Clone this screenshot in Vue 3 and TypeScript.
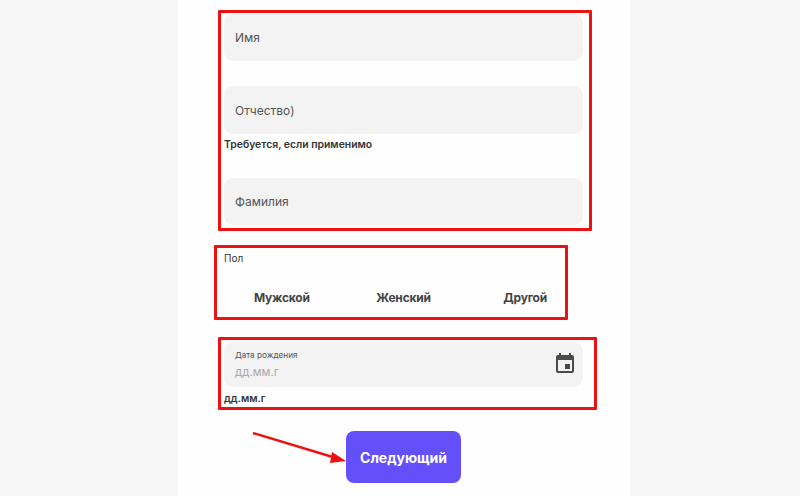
<script setup lang="ts">
const genders: string[] = ['Мужской', 'Женский', 'Другой']
</script>

<template>
  <div class="page">
    <main class="card">
      <div class="field name-first"><span class="ph">Имя</span></div>
      <div class="field name-mid"><span class="ph">Отчество)</span></div>
      <p class="help">Требуется, если применимо</p>
      <div class="field name-last"><span class="ph">Фамилия</span></div>

      <div class="gender-label">Пол</div>
      <div class="genders">
        <span v-for="g in genders" :key="g">{{ g }}</span>
      </div>

      <div class="field date">
        <div class="date-text">
          <span class="date-label">Дата рождения</span>
          <span class="date-ph">дд.мм.г</span>
        </div>
        <svg class="cal" viewBox="0 0 24 24" width="24" height="24" aria-hidden="true">
          <path fill="#4a4a4a" d="M19 4h-1V2h-2v2H8V2H6v2H5a2 2 0 0 0-2 2v14a2 2 0 0 0 2 2h14a2 2 0 0 0 2-2V6a2 2 0 0 0-2-2zm0 16H5V9h14v11z" />
          <rect fill="#4a4a4a" x="12" y="13" width="5" height="5" />
        </svg>
      </div>
      <p class="help date-help">дд.мм.г</p>

      <div class="actions">
        <button class="next" type="button">Следующий</button>
      </div>

      <div class="mark mark-a"></div>
      <div class="mark mark-b"></div>
      <div class="mark mark-c"></div>
      <svg class="arrow" viewBox="0 0 100 34" width="100" height="34" aria-hidden="true">
        <line x1="1" y1="1" x2="84" y2="26" stroke="#ee1111" stroke-width="2.4" />
        <polygon points="80,20 94,29 78,31" fill="#ee1111" />
      </svg>
    </main>
  </div>
</template>

<style scoped>
.page {
  width: 800px;
  height: 496px;
  overflow: hidden;
  background: #f7f7f7;
  display: flex;
  justify-content: center;
  font-family: Inter, "Liberation Sans", sans-serif;
  color: #3c3c3c;
}
.card {
  position: relative;
  box-sizing: border-box;
  width: 452px;
  height: 496px;
  margin-left: 8px;
  padding: 14px 47px 0 46px;
  background: #fefefe;
}
.field {
  box-sizing: border-box;
  height: 47px;
  border-radius: 9px;
  background: #f3f3f3;
  padding: 0 11px;
  display: flex;
  align-items: center;
}
.ph {
  font-size: 12px;
  color: #555;
}
.name-mid {
  margin-top: 25px;
  height: 48px;
}
.help {
  margin: 4px 0 0;
  height: 14px;
  font-size: 10.4px;
  line-height: 14px;
  font-weight: 600;
  color: #333;
}
.name-last {
  margin-top: 26px;
}
.gender-label {
  margin-top: 26px;
  height: 14px;
  font-size: 10px;
  line-height: 14px;
  color: #333;
}
.genders {
  margin-top: 25px;
  display: grid;
  grid-template-columns: repeat(3, 1fr);
  width: 365px;
  margin-left: -3px;
  font-size: 12px;
  letter-spacing: -0.2px;
  line-height: 16px;
  font-weight: 700;
  color: #444;
  text-align: center;
}
.date {
  margin-top: 36px;
  justify-content: space-between;
  height: 45px;
  padding-right: 6px;
}
.date-text {
  display: flex;
  flex-direction: column;
  gap: 4px;
}
.date-label {
  font-size: 8.2px;
  line-height: 11px;
  color: #555;
}
.date-ph {
  font-size: 11.5px;
  line-height: 14px;
  color: #aaa;
}
.cal {
  margin-bottom: 3px;
}
.date-help {
  margin-top: 5px;
}
.actions {
  margin-top: 25px;
  display: flex;
  justify-content: center;
}
.next {
  width: 115px;
  height: 52px;
  border: none;
  border-radius: 8px;
  background: #6450fa;
  color: #fff;
  font: 700 14px Inter, "Liberation Sans", sans-serif;
}
.mark {
  position: absolute;
  box-sizing: border-box;
  border: 3px solid #ee1111;
  border-radius: 1px;
}
.mark-a { left: 40px; top: 10px; width: 374px; height: 221px; }
.mark-b { left: 36px; top: 245px; width: 354px; height: 75px; }
.mark-c { left: 40px; top: 337px; width: 379px; height: 73px; }
.arrow {
  position: absolute;
  left: 74px;
  top: 432px;
}
</style>
